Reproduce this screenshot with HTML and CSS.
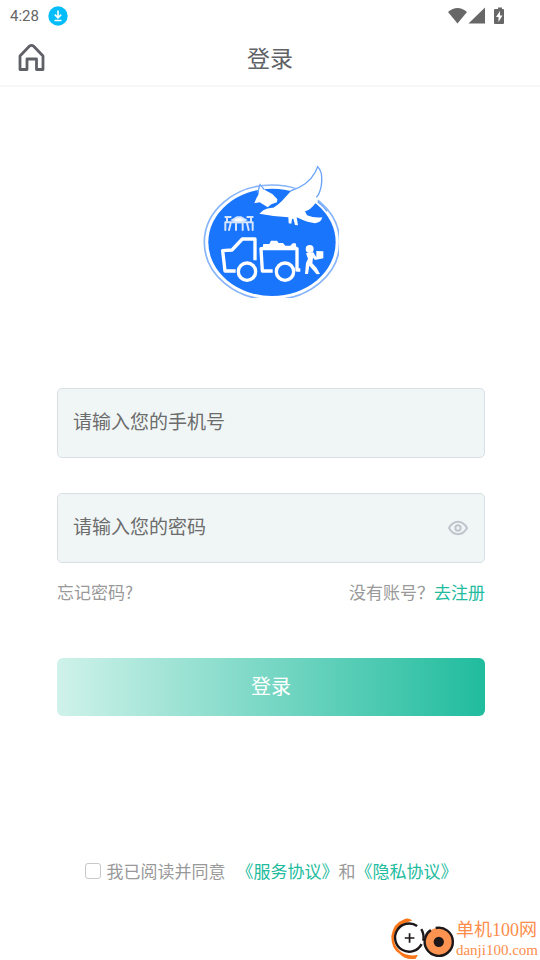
FILE: index.html
```html
<!DOCTYPE html>
<html lang="zh-CN">
<head>
  <meta charset="UTF-8">
  <meta name="viewport" content="width=device-width, initial-scale=1.0">
  <title>登录</title>
  <link rel="stylesheet" href="styles.css">
</head>
<body>
  <div class="status">
    <span class="time">4:28</span>
    <svg class="download" viewBox="0 0 20 20" width="20" height="20">
      <circle cx="10" cy="10" r="9.7" fill="#03bdfb"/>
      <path d="M10 4.5v7M6.8 8.6l3.2 3.2 3.2-3.2M6.5 14.5h7" fill="none" stroke="#fff" stroke-width="1.6"/>
    </svg>
    <svg class="signals" viewBox="0 0 58 18" width="58" height="18" fill="#676767">
      <path d="M0 5Q9.500-3 19 5L9.500 16.500z"/>
      <path d="M37 .5v16H20.500z"/>
      <path d="M48 2h2V.5h4V2h1q1 0 1 1v13q0 1-1 1h-8q-1 0-1-1V3q0-1 1-1z"/>
      <path d="M52 4l-4 6h2.500v5l4-6.500H52z" fill="#fff"/>
    </svg>
  </div>
  <header class="nav">
    <a href="#" class="home" aria-label="首页">
      <svg viewBox="0 0 28 28" width="28" height="28" fill="none" stroke="#606166" stroke-width="2.800" stroke-linejoin="round">
        <path d="M2 13L11.300 3.300Q13.500 1.400 15.700 3.300L25 13V26.500H18.500V16H9V26.500H2z"/>
      </svg>
    </a>
    <h1>登录</h1>
  </header>
  <main>
    <svg class="logo" viewBox="24 12 408 402" role="img" aria-label="logo">
      <ellipse cx="231" cy="247" rx="203" ry="172" fill="#fff" stroke="#86b4fa" stroke-width="5"/>
      <ellipse cx="231" cy="247" rx="191" ry="161" fill="#1975fc"/>
      <!-- bird -->
      <path d="M290 91L325 71L355 46L368 20L384 51L376 98L390 128L372 118L362 60L296 97z" fill="#fff"/>
      <path d="M193 161L205 151Q218 142 235 143Q248 136 260 124L290 91Q346 67 368 20Q378 32 380 51Q382 78 373 101Q374 118 360 131Q348 148 330 154L336 166Q358 175 382 172Q378 188 360 190Q338 188 305 172L309 196L300 195L295 176L291 177L289 191L281 190L280 172Q240 170 193 161z" fill="#fff"/>
      <path d="M286 93Q340 76 361 36L368 20Q380 34 380 51Q382 78 371 103L364 112M368 125Q384 137 396 154" fill="none" stroke="#6ba3fa" stroke-width="4"/>
      <path d="M195 72L211 91L232 102L247 118L246 127L229 133L218 142L194 127L178 130Q184 112 190 104z" fill="#fff"/>
      <path d="M188 98L195 74L208 89" fill="none" stroke="#6ba3fa" stroke-width="4"/>
      <!-- drone -->
      <g fill="none" stroke="#d5e5ff" stroke-width="6" stroke-linecap="round">
        <path d="M91 171h16M157 171h16M96 172v14M168 172v14M92 187h78M91 187v23M173 187v23M107 190l-5 20M156 190l5 20M123 192v18M143 192v18"/>
        <path d="M112 180l14-8h12l14 8-12 7h-16z" fill="#fff"/>
      </g>
      <!-- truck -->
      <g fill="none" stroke="#fff" stroke-width="10" stroke-linejoin="round">
        <path d="M122 333H90L83 272L111 270L142 237H180V301"/>
        <path d="M233 333H202L198 266H306V330H316"/>
        <circle cx="156" cy="335" r="26"/>
        <circle cx="270" cy="335" r="26"/>
      </g>
      <path d="M202 266l3-14h18l5-10h18l5 7h13l7 8h15l7-7h9l4 18z" fill="#fff"/>
      <!-- worker -->
      <circle cx="344" cy="267" r="12" fill="#fff"/>
      <path d="M333 280l22-3 9 15v-19l21 1v21l-25 5-6-7-2 17 13 14 10 18-10 1-22-26-4 25h-9l3-33 6-13z" fill="#fff"/>
    </svg>

    <form class="login">
      <div class="field">
        <input type="tel" placeholder="请输入您的手机号" aria-label="手机号">
      </div>
      <div class="field">
        <input type="password" placeholder="请输入您的密码" aria-label="密码">
        <button type="button" class="eye" aria-label="显示密码">
          <svg viewBox="0 0 20 16" width="20" height="16" fill="none" stroke="#c0c4cc" stroke-width="2">
            <path d="M1 8Q4.500 1.800 10 1.800T19 8Q15.500 14.200 10 14.200T1 8z"/>
            <circle cx="10" cy="8" r="2.700"/>
          </svg>
        </button>
      </div>
      <div class="links">
        <a href="#">忘记密码?</a>
        <span>没有账号？<a href="#" class="green">去注册</a></span>
      </div>
      <button type="submit" class="submit">登录</button>
      <div class="agree">
        <input type="checkbox" id="agree">
        <label for="agree">我已阅读并同意</label>
        <p><a href="#" class="green">《服务协议》</a>和<a href="#" class="green">《隐私协议》</a></p>
      </div>
    </form>
  </main>

  <div class="mark">
    <svg viewBox="36 36 189 128" width="65" height="44" fill="none">
      <path d="M98 49Q84 38 72 47Q43 57 37 94Q36 130 60 145Q79 166 108 160L114 149Q82 155 62 138Q41 119 45 91Q54 60 98 49z" fill="#fb7618"/>
      <path d="M112 65A41 41 0 1 0 125 118" stroke="#1d1719" stroke-width="7"/>
      <path d="M124 74Q133 88 130 108" stroke="#1d1719" stroke-width="7"/>
      <path d="M90 86v28M76 100h28" stroke="#1d1719" stroke-width="5"/>
      <circle cx="175" cy="111" r="41" fill="#fd9350"/>
      <path d="M166 71A41 41 0 1 1 136 98Q140 84 152 77" stroke="#1d1719" stroke-width="7"/>
      <circle cx="175" cy="111" r="15" fill="#1d1719"/>
    </svg>
    <div>
      <strong>单机100网</strong>
      <span>danji100.com</span>
    </div>
  </div>
</body>
</html>
```
FILE: styles.css
```css
* {margin: 0; padding: 0; box-sizing: border-box;}
body{
  min-height: 100vh;
  position: relative;
  background: #fff;
  color: #999;
  font-family: "Noto Sans CJK SC", sans-serif;
  font-size: 17px;
  font-weight: 400;
  line-height: 24px;
}
a {
  color: inherit;
  text-decoration: none;
}
input, button {
  font-family: inherit;
  font-weight: inherit;
}
.status {
  height: 30px;
  display: flex;
  align-items: center;
  padding: 1px 34px 0 10px;
}
.time {
  font-family: Roboto, sans-serif;
  font-size: 15px;
  color: #666;
}
.download {
  margin-left: 9px;
}
.signals {
  margin-left: auto;
}
.nav {
  height: 57px;
  display: grid;
  grid-template-columns: 28px 1fr 28px;
  align-items: center;
  padding: 0 18px 1px;
  border-bottom: 2px solid #f7f7f7;
}
.home svg {
  display: block;
}
.nav h1 {
  font-size: 23px;
  font-weight: inherit;
  text-align: center;
  color: #606266;
}
main {
  padding: 77px 55px 0 57px;
}
.logo {
  display: block;
  width: 136px;
  height: 134px;
  margin: 0 auto;
}
.login {
  margin-top: 90px;
}
.field {
  height: 70px;
  display: flex;
  align-items: center;
  padding: 0 16px 0 15px;
  margin-bottom: 35px;
  background: #f0f6f6;
  border: 1px solid #d9e0e5;
  border-radius: 5px;
}
.field input {
  flex: 1;
  min-width: 0;
  height: 40px;
  padding-bottom: 5px;
  border: 0;
  outline: none;
  background: none;
  font-size: 19px;
  color: #606266;
}
.field input::placeholder {
  color: #6c6c6c;
}
.eye {
  border: 0;
  background: none;
  cursor: pointer;
}
.eye svg {
  display: block;
}
.links {
  display: flex;
  justify-content: space-between;
  margin-top: -18px;
}
.green {
  color: #21bb9e;
}
.submit {
  display: block;
  width: 100%;
  height: 58px;
  margin-top: 54px;
  padding-bottom: 4px;
  border: 0;
  border-radius: 6px;
  background: linear-gradient(to right, #cff2ea, #20bc9e);
  color: #fff;
  font-size: 20px;
  cursor: pointer;
}
.agree {
  display: flex;
  justify-content: center;
  align-items: center;
  margin-top: 143px;
}
.agree input {
  appearance: none;
  width: 16px;
  height: 16px;
  margin-right: 6px;
  border: 1px solid #c8c9cc;
  border-radius: 3px;
}
.agree input:checked {
  background: #21bb9e;
}
.agree p {
  margin-left: 11px;
}
.mark {
  position: absolute;
  right: 2px;
  bottom: 0;
  display: flex;
  align-items: center;
  color: #fd8d4b;
  font-family: "Liberation Serif", "Noto Sans CJK SC", serif;
}
.mark strong, .mark span {
  display: block;
  white-space: nowrap;
}
.mark strong {
  font-size: 18px;
  font-weight: inherit;
  line-height: 24px;
}
.mark span {
  font-size: 15px;
  line-height: 16px;
}
```
